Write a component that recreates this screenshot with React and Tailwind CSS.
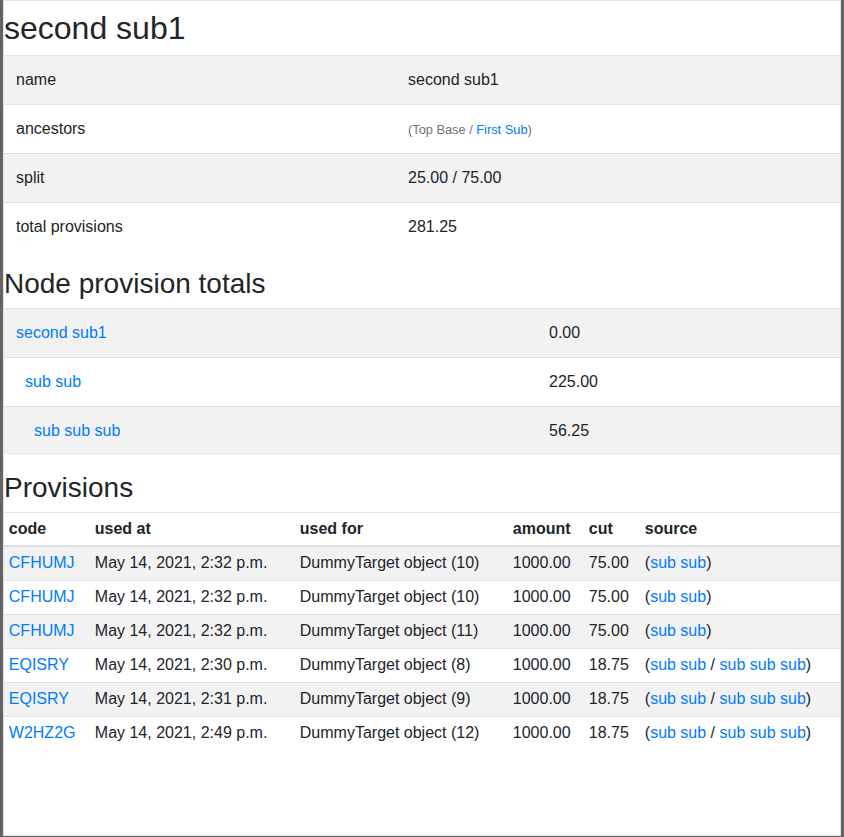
import React from 'react';

const font = { fontFamily: '"Liberation Sans", Arial, sans-serif' };

const details = [
  { label: 'name', value: 'second sub1' },
  { label: 'ancestors', value: 'ancestors' },
  { label: 'split', value: '25.00 / 75.00' },
  { label: 'total provisions', value: '281.25' },
];

const totals = [
  { name: 'second sub1', indent: 'pl-3', total: '0.00' },
  { name: 'sub sub', indent: 'pl-[21px]', total: '225.00' },
  { name: 'sub sub sub', indent: 'pl-[30px]', total: '56.25' },
];

const provisions = [
  { code: 'CFHUMJ', at: 'May 14, 2021, 2:32 p.m.', target: 'DummyTarget object (10)', cut: '75.00', deep: false },
  { code: 'CFHUMJ', at: 'May 14, 2021, 2:32 p.m.', target: 'DummyTarget object (10)', cut: '75.00', deep: false },
  { code: 'CFHUMJ', at: 'May 14, 2021, 2:32 p.m.', target: 'DummyTarget object (11)', cut: '75.00', deep: false },
  { code: 'EQISRY', at: 'May 14, 2021, 2:30 p.m.', target: 'DummyTarget object (8)', cut: '18.75', deep: true },
  { code: 'EQISRY', at: 'May 14, 2021, 2:31 p.m.', target: 'DummyTarget object (9)', cut: '18.75', deep: true },
  { code: 'W2HZ2G', at: 'May 14, 2021, 2:49 p.m.', target: 'DummyTarget object (12)', cut: '18.75', deep: true },
];

const Link = ({ children }) => <a href="#" className="text-[#007bff] no-underline">{children}</a>;

const Stripe = (i) => (i % 2 === 0 ? 'bg-[#f2f2f2]' : 'bg-white');

export default function App() {
  return (
    <div className="min-h-screen bg-[#646464] text-[#212529] text-base leading-[1.5]" style={font}>
      <div className="ml-[3px] w-[838px] h-[836px] border border-[#dee2e6] bg-white overflow-hidden">
        <h2 className="mt-2 mb-2 text-[32px] leading-[1.2] font-medium">second sub1</h2>
        <table className="w-full border-collapse mb-4">
          <tbody>
            {details.map((row, i) => (
              <tr key={row.label} className={Stripe(i)}>
                <td className="w-[392px] p-3 border-t border-[#dee2e6] align-top">{row.label}</td>
                <td className="p-3 border-t border-[#dee2e6] align-top">
                  {row.label === 'ancestors' ? (
                    <span className="text-[12.8px] text-[#6c757d]">
                      (Top Base / <Link>First Sub</Link>)
                    </span>
                  ) : (
                    row.value
                  )}
                </td>
              </tr>
            ))}
          </tbody>
        </table>

        <h3 className="mb-[7px] text-[28px] leading-[1.2] font-medium">Node provision totals</h3>
        <table className="w-full border-collapse mb-4">
          <tbody>
            {totals.map((row, i) => (
              <tr key={row.name} className={Stripe(i)}>
                <td className={`w-[533px] ${row.indent} pr-3 py-3 border-t border-[#dee2e6]`}>
                  <Link>{row.name}</Link>
                </td>
                <td className="p-3 border-t border-[#dee2e6]">{row.total}</td>
              </tr>
            ))}
          </tbody>
        </table>

        <h3 className="mb-[7px] text-[28px] leading-[1.2] font-medium">Provisions</h3>
        <table className="w-full border-collapse text-left">
          <thead>
            <tr>
              <th className="w-[86px] px-[0.3rem] py-[4px] font-bold border-t border-b-2 border-[#dee2e6]">code</th>
              <th className="w-[205px] px-[0.3rem] py-[4px] font-bold border-t border-b-2 border-[#dee2e6]">used at</th>
              <th className="w-[213px] px-[0.3rem] py-[4px] font-bold border-t border-b-2 border-[#dee2e6]">used for</th>
              <th className="w-[76px] px-[0.3rem] py-[4px] font-bold border-t border-b-2 border-[#dee2e6]">amount</th>
              <th className="w-[56px] px-[0.3rem] py-[4px] font-bold border-t border-b-2 border-[#dee2e6]">cut</th>
              <th className="px-[0.3rem] py-[4px] font-bold border-t border-b-2 border-[#dee2e6]">source</th>
            </tr>
          </thead>
          <tbody>
            {provisions.map((p, i) => (
              <tr key={i} className={Stripe(i)}>
                <td className="px-[0.3rem] py-[4.5px] border-t border-[#dee2e6]"><Link>{p.code}</Link></td>
                <td className="px-[0.3rem] py-[4.5px] border-t border-[#dee2e6]">{p.at}</td>
                <td className="px-[0.3rem] py-[4.5px] border-t border-[#dee2e6]">{p.target}</td>
                <td className="px-[0.3rem] py-[4.5px] border-t border-[#dee2e6]">1000.00</td>
                <td className="px-[0.3rem] py-[4.5px] border-t border-[#dee2e6]">{p.cut}</td>
                <td className="px-[0.3rem] py-[4.5px] border-t border-[#dee2e6]">
                  (<Link>sub sub</Link>
                  {p.deep && (
                    <>
                      {' / '}
                      <Link>sub sub sub</Link>
                    </>
                  )}
                  )
                </td>
              </tr>
            ))}
          </tbody>
        </table>
      </div>
    </div>
  );
}
